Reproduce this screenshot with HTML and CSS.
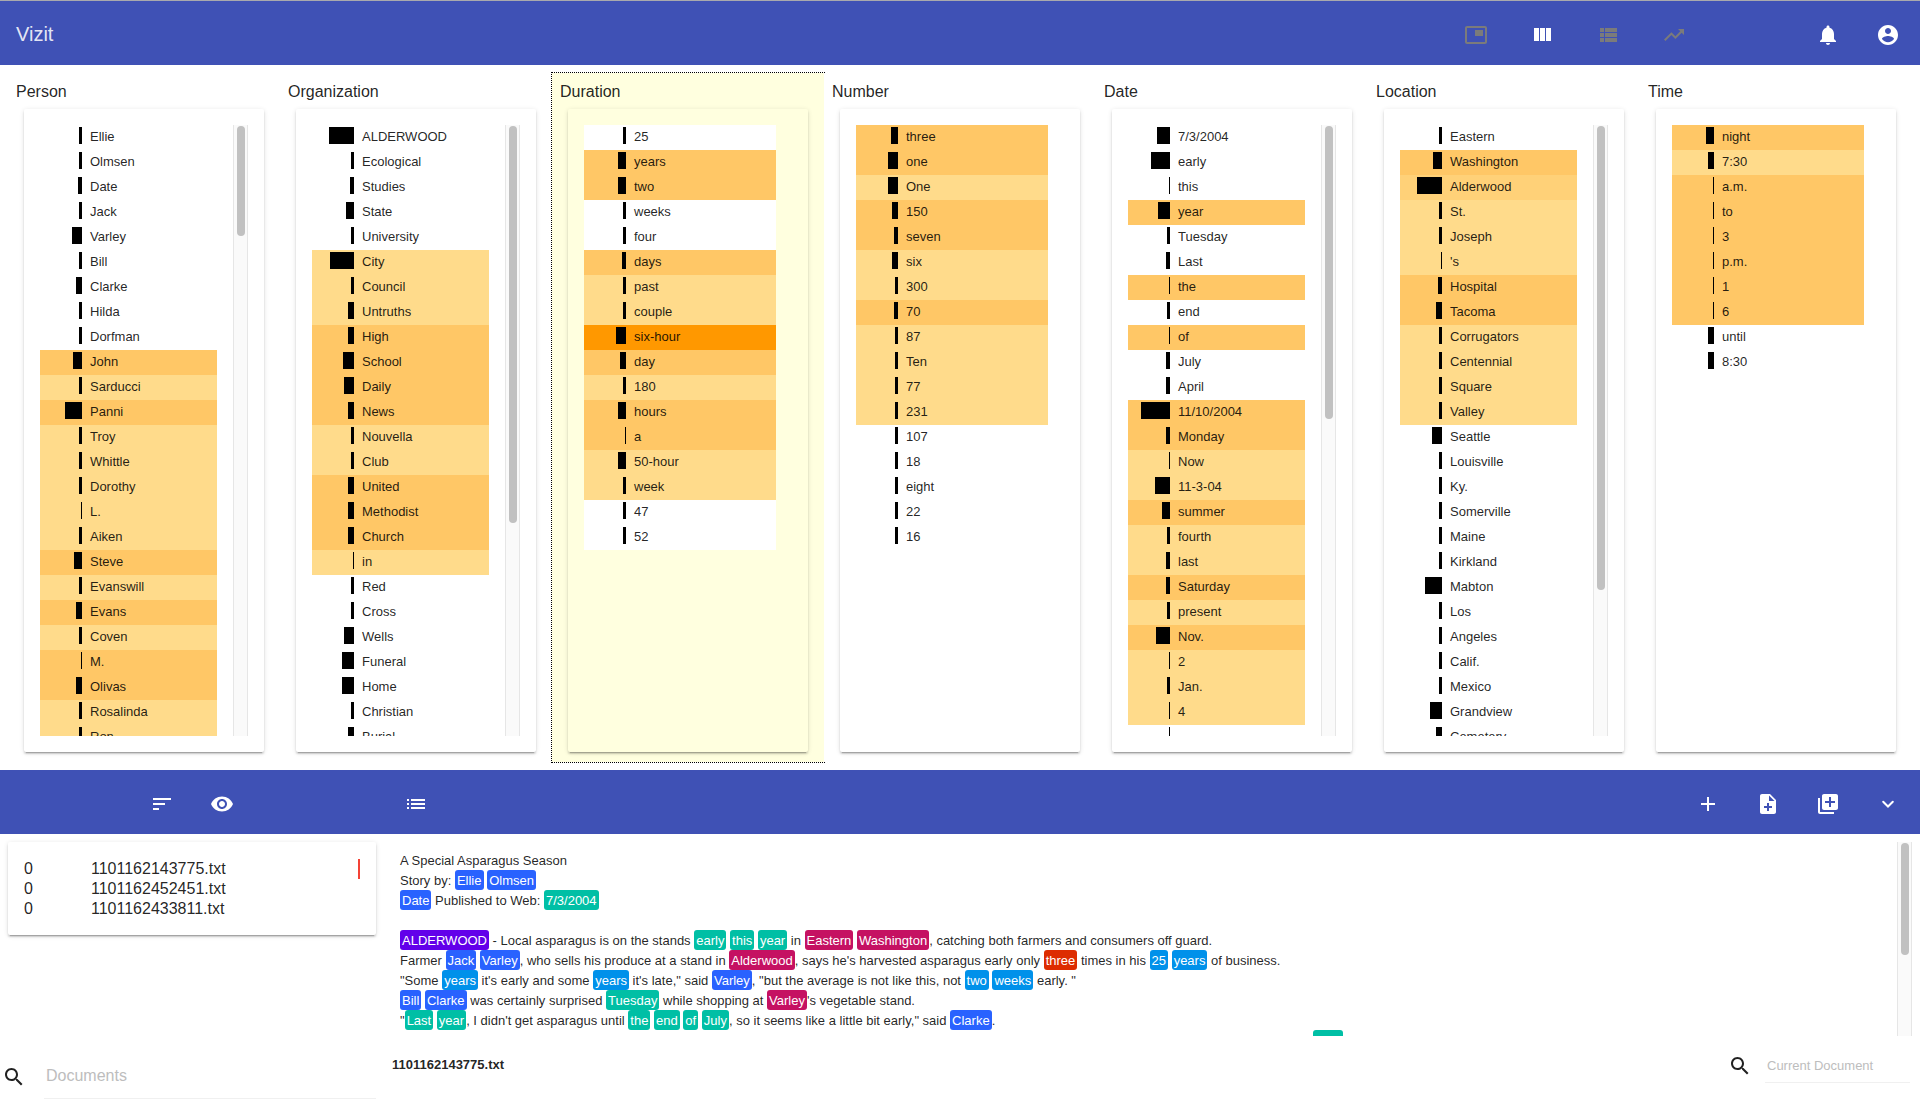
FILE: index.html
```html
<!DOCTYPE html>
<html lang="en">
<head>
<meta charset="utf-8">
<title>Vizit</title>
<link rel="stylesheet" href="styles.css">
</head>
<body>
<header class="toolbar top-bar">
  <h1 class="brand">Vizit</h1>
  <nav class="views" aria-label="Views">
    <button class="icon-btn muted" aria-label="Document view"><svg viewBox="0 0 24 24"><path d="M19 7h-8v6h8V7zm2-4H3c-1.100 0-2 .9-2 2v14c0 1.100.9 1.980 2 1.980h18c1.100 0 2-.880 2-1.980V5c0-1.100-.9-2-2-2zm0 16.010H3V4.980h18v14.030z"/></svg></button>
    <button class="icon-btn" aria-label="List view"><svg viewBox="0 0 24 24"><path d="M10 18h5V5h-5v13zm-6 0h5V5H4v13zM16 5v13h5V5h-5z"/></svg></button>
    <button class="icon-btn muted" aria-label="Grid view"><svg viewBox="0 0 24 24"><path d="M4 14h4v-4H4v4zm0 5h4v-4H4v4zM4 9h4V5H4v4zm5 5h12v-4H9v4zm0 5h12v-4H9v4zM9 5v4h12V5H9z"/></svg></button>
    <button class="icon-btn muted" aria-label="Timeline view"><svg viewBox="0 0 24 24"><path d="M16 6l2.290 2.290-4.880 4.880-4-4L2 16.590 3.410 18l6-6 4 4 6.300-6.290L22 12V6z"/></svg></button>
  </nav>
  <div class="actions">
    <button class="icon-btn" aria-label="Notifications"><svg viewBox="0 0 24 24"><path d="M12 22c1.100 0 2-.9 2-2h-4c0 1.100.89 2 2 2zm6-6v-5c0-3.070-1.640-5.640-4.500-6.320V4c0-.830-.670-1.500-1.500-1.500s-1.500.670-1.500 1.500v.680C7.630 5.360 6 7.920 6 11v5l-2 2v1h16v-1l-2-2z"/></svg></button>
    <button class="icon-btn" aria-label="Account"><svg viewBox="0 0 24 24"><path d="M12 2C6.480 2 2 6.480 2 12s4.480 10 10 10 10-4.480 10-10S17.520 2 12 2zm0 3c1.660 0 3 1.340 3 3s-1.340 3-3 3-3-1.340-3-3 1.340-3 3-3zm0 14.200c-2.500 0-4.710-1.280-6-3.220.030-1.990 4-3.080 6-3.080 1.990 0 5.970 1.090 6 3.080-1.290 1.940-3.500 3.220-6 3.220z"/></svg></button>
  </div>
</header>

<main class="columns">
  <section class="column">
    <h2>Person</h2>
    <div class="card"><div class="scroller">
      <ul>
        <li><i style="width:3px"></i>Ellie</li>
        <li><i style="width:3px"></i>Olmsen</li>
        <li><i style="width:4px"></i>Date</li>
        <li><i style="width:3px"></i>Jack</li>
        <li><i style="width:10px"></i>Varley</li>
        <li><i style="width:3px"></i>Bill</li>
        <li><i style="width:6px"></i>Clarke</li>
        <li><i style="width:3px"></i>Hilda</li>
        <li><i style="width:3px"></i>Dorfman</li>
        <li class="mid"><i style="width:9px"></i>John</li>
        <li class="low"><i style="width:3px"></i>Sarducci</li>
        <li class="mid"><i style="width:17px"></i>Panni</li>
        <li class="low"><i style="width:3px"></i>Troy</li>
        <li class="low"><i style="width:3px"></i>Whittle</li>
        <li class="low"><i style="width:3px"></i>Dorothy</li>
        <li class="low"><i style="width:1px"></i>L.</li>
        <li class="low"><i style="width:3px"></i>Aiken</li>
        <li class="mid"><i style="width:8px"></i>Steve</li>
        <li class="low"><i style="width:3px"></i>Evanswill</li>
        <li class="mid"><i style="width:6px"></i>Evans</li>
        <li class="low"><i style="width:3px"></i>Coven</li>
        <li class="mid"><i style="width:1px"></i>M.</li>
        <li class="mid"><i style="width:6px"></i>Olivas</li>
        <li class="low"><i style="width:3px"></i>Rosalinda</li>
        <li class="low"><i style="width:3px"></i>Ron</li>
      </ul>
      <div class="track"><div class="thumb" style="height:18%"></div></div>
    </div></div>
  </section>

  <section class="column">
    <h2>Organization</h2>
    <div class="card"><div class="scroller">
      <ul>
        <li><i style="width:25px"></i>ALDERWOOD</li>
        <li><i style="width:3px"></i>Ecological</li>
        <li><i style="width:4px"></i>Studies</li>
        <li><i style="width:8px"></i>State</li>
        <li><i style="width:3px"></i>University</li>
        <li class="low"><i style="width:24px"></i>City</li>
        <li class="low"><i style="width:3px"></i>Council</li>
        <li class="low"><i style="width:6px"></i>Untruths</li>
        <li class="mid"><i style="width:6px"></i>High</li>
        <li class="mid"><i style="width:11px"></i>School</li>
        <li class="mid"><i style="width:10px"></i>Daily</li>
        <li class="mid"><i style="width:6px"></i>News</li>
        <li class="low"><i style="width:3px"></i>Nouvella</li>
        <li class="low"><i style="width:3px"></i>Club</li>
        <li class="mid"><i style="width:6px"></i>United</li>
        <li class="mid"><i style="width:6px"></i>Methodist</li>
        <li class="mid"><i style="width:6px"></i>Church</li>
        <li class="low"><i style="width:1px"></i>in</li>
        <li><i style="width:3px"></i>Red</li>
        <li><i style="width:3px"></i>Cross</li>
        <li><i style="width:10px"></i>Wells</li>
        <li><i style="width:12px"></i>Funeral</li>
        <li><i style="width:12px"></i>Home</li>
        <li><i style="width:3px"></i>Christian</li>
        <li><i style="width:6px"></i>Burial</li>
      </ul>
      <div class="track"><div class="thumb" style="height:65%"></div></div>
    </div></div>
  </section>

  <section class="column selected">
    <h2>Duration</h2>
    <div class="card"><div class="scroller">
      <ul>
        <li><i style="width:3px"></i>25</li>
        <li class="mid"><i style="width:8px"></i>years</li>
        <li class="mid"><i style="width:8px"></i>two</li>
        <li><i style="width:3px"></i>weeks</li>
        <li><i style="width:3px"></i>four</li>
        <li class="mid"><i style="width:4px"></i>days</li>
        <li class="low"><i style="width:3px"></i>past</li>
        <li class="low"><i style="width:3px"></i>couple</li>
        <li class="hot"><i style="width:10px"></i>six-hour</li>
        <li class="mid"><i style="width:6px"></i>day</li>
        <li class="low"><i style="width:3px"></i>180</li>
        <li class="mid"><i style="width:8px"></i>hours</li>
        <li class="mid"><i style="width:1px"></i>a</li>
        <li class="low"><i style="width:8px"></i>50-hour</li>
        <li class="low"><i style="width:3px"></i>week</li>
        <li><i style="width:3px"></i>47</li>
        <li><i style="width:3px"></i>52</li>
      </ul>
    </div></div>
  </section>

  <section class="column">
    <h2>Number</h2>
    <div class="card"><div class="scroller">
      <ul>
        <li class="mid"><i style="width:7px"></i>three</li>
        <li class="mid"><i style="width:10px"></i>one</li>
        <li class="low"><i style="width:10px"></i>One</li>
        <li class="mid"><i style="width:6px"></i>150</li>
        <li class="mid"><i style="width:4px"></i>seven</li>
        <li class="low"><i style="width:6px"></i>six</li>
        <li class="low"><i style="width:3px"></i>300</li>
        <li class="mid"><i style="width:4px"></i>70</li>
        <li class="low"><i style="width:3px"></i>87</li>
        <li class="low"><i style="width:3px"></i>Ten</li>
        <li class="low"><i style="width:3px"></i>77</li>
        <li class="low"><i style="width:3px"></i>231</li>
        <li><i style="width:3px"></i>107</li>
        <li><i style="width:3px"></i>18</li>
        <li><i style="width:3px"></i>eight</li>
        <li><i style="width:3px"></i>22</li>
        <li><i style="width:3px"></i>16</li>
      </ul>
    </div></div>
  </section>

  <section class="column">
    <h2>Date</h2>
    <div class="card"><div class="scroller">
      <ul>
        <li><i style="width:13px"></i>7/3/2004</li>
        <li><i style="width:19px"></i>early</li>
        <li><i style="width:1px"></i>this</li>
        <li class="mid"><i style="width:12px"></i>year</li>
        <li><i style="width:3px"></i>Tuesday</li>
        <li><i style="width:4px"></i>Last</li>
        <li class="mid"><i style="width:1px"></i>the</li>
        <li><i style="width:3px"></i>end</li>
        <li class="mid"><i style="width:1px"></i>of</li>
        <li><i style="width:4px"></i>July</li>
        <li><i style="width:4px"></i>April</li>
        <li class="mid"><i style="width:29px"></i>11/10/2004</li>
        <li class="mid"><i style="width:4px"></i>Monday</li>
        <li class="low"><i style="width:1px"></i>Now</li>
        <li class="low"><i style="width:15px"></i>11-3-04</li>
        <li class="mid"><i style="width:8px"></i>summer</li>
        <li class="low"><i style="width:3px"></i>fourth</li>
        <li class="low"><i style="width:4px"></i>last</li>
        <li class="mid"><i style="width:4px"></i>Saturday</li>
        <li class="low"><i style="width:3px"></i>present</li>
        <li class="mid"><i style="width:14px"></i>Nov.</li>
        <li class="low"><i style="width:1px"></i>2</li>
        <li class="low"><i style="width:3px"></i>Jan.</li>
        <li class="low"><i style="width:1px"></i>4</li>
        <li><i style="width:1px"></i>,</li>
      </ul>
      <div class="track"><div class="thumb" style="height:48%"></div></div>
    </div></div>
  </section>

  <section class="column">
    <h2>Location</h2>
    <div class="card"><div class="scroller">
      <ul>
        <li><i style="width:3px"></i>Eastern</li>
        <li class="mid"><i style="width:9px"></i>Washington</li>
        <li class="midlow"><i style="width:25px"></i>Alderwood</li>
        <li class="low"><i style="width:3px"></i>St.</li>
        <li class="low"><i style="width:3px"></i>Joseph</li>
        <li class="low"><i style="width:1px"></i>'s</li>
        <li class="mid"><i style="width:4px"></i>Hospital</li>
        <li class="mid"><i style="width:6px"></i>Tacoma</li>
        <li class="low"><i style="width:3px"></i>Corrugators</li>
        <li class="low"><i style="width:3px"></i>Centennial</li>
        <li class="low"><i style="width:3px"></i>Square</li>
        <li class="low"><i style="width:3px"></i>Valley</li>
        <li><i style="width:10px"></i>Seattle</li>
        <li><i style="width:3px"></i>Louisville</li>
        <li><i style="width:3px"></i>Ky.</li>
        <li><i style="width:3px"></i>Somerville</li>
        <li><i style="width:3px"></i>Maine</li>
        <li><i style="width:3px"></i>Kirkland</li>
        <li><i style="width:17px"></i>Mabton</li>
        <li><i style="width:3px"></i>Los</li>
        <li><i style="width:3px"></i>Angeles</li>
        <li><i style="width:3px"></i>Calif.</li>
        <li><i style="width:3px"></i>Mexico</li>
        <li><i style="width:12px"></i>Grandview</li>
        <li><i style="width:6px"></i>Cemetery</li>
      </ul>
      <div class="track"><div class="thumb" style="height:76%"></div></div>
    </div></div>
  </section>

  <section class="column">
    <h2>Time</h2>
    <div class="card"><div class="scroller">
      <ul>
        <li class="mid"><i style="width:8px"></i>night</li>
        <li class="low"><i style="width:6px"></i>7:30</li>
        <li class="mid"><i style="width:1px"></i>a.m.</li>
        <li class="mid"><i style="width:1px"></i>to</li>
        <li class="mid"><i style="width:1px"></i>3</li>
        <li class="mid"><i style="width:1px"></i>p.m.</li>
        <li class="mid"><i style="width:1px"></i>1</li>
        <li class="mid"><i style="width:1px"></i>6</li>
        <li><i style="width:6px"></i>until</li>
        <li><i style="width:6px"></i>8:30</li>
      </ul>
    </div></div>
  </section>
</main>

<div class="toolbar doc-bar">
  <div class="doc-tools">
    <button class="icon-btn" aria-label="Sort documents"><svg viewBox="0 0 24 24"><path d="M3 18h6v-2H3v2zM3 6v2h18V6H3zm0 7h12v-2H3v2z"/></svg></button>
    <button class="icon-btn" aria-label="Show document"><svg viewBox="0 0 24 24"><path d="M12 4.500C7 4.500 2.730 7.610 1 12c1.730 4.390 6 7.500 11 7.500s9.270-3.110 11-7.500c-1.730-4.390-6-7.500-11-7.500zM12 17c-2.760 0-5-2.240-5-5s2.240-5 5-5 5 2.240 5 5-2.240 5-5 5zm0-8c-1.660 0-3 1.340-3 3s1.340 3 3 3 3-1.340 3-3-1.340-3-3-3z"/></svg></button>
  </div>
  <button class="icon-btn text-tool" aria-label="Entity list"><svg viewBox="0 0 24 24"><path d="M3 13h2v-2H3v2zm0 4h2v-2H3v2zm0-8h2V7H3v2zm4 4h14v-2H7v2zm0 4h14v-2H7v2zM7 7v2h14V7H7z"/></svg></button>
  <div class="actions">
    <button class="icon-btn" aria-label="Add"><svg viewBox="0 0 24 24"><path d="M19 13h-6v6h-2v-6H5v-2h6V5h2v6h6v2z"/></svg></button>
    <button class="icon-btn" aria-label="Add document"><svg viewBox="0 0 24 24"><path d="M14 2H6c-1.100 0-1.990.9-1.990 2L4 20c0 1.100.89 2 1.990 2H18c1.100 0 2-.9 2-2V8l-6-6zm2 14h-3v3h-2v-3H8v-2h3v-3h2v3h3v2zm-3-7V3.500L18.500 9H13z"/></svg></button>
    <button class="icon-btn" aria-label="Add collection"><svg viewBox="0 0 24 24"><path d="M4 6H2v14c0 1.100.9 2 2 2h14v-2H4V6zm16-4H8c-1.100 0-2 .9-2 2v12c0 1.100.9 2 2 2h12c1.100 0 2-.9 2-2V4c0-1.100-.9-2-2-2zm-1 9h-4v4h-2v-4H9V9h4V5h2v4h4v2z"/></svg></button>
    <button class="icon-btn" aria-label="Collapse"><svg viewBox="0 0 24 24"><path d="M7.200 9.700L12 14.500l4.800-4.800" fill="none" stroke="currentColor" stroke-width="2" stroke-linecap="round"/></svg></button>
  </div>
</div>

<div class="workspace">
  <aside class="documents">
    <div class="card doc-card">
      <table>
        <tr><td class="count">0</td><td>1101162143775.txt</td><td class="mark"><span></span></td></tr>
        <tr><td class="count">0</td><td>1101162452451.txt</td><td></td></tr>
        <tr><td class="count">0</td><td>1101162433811.txt</td><td></td></tr>
      </table>
    </div>
    <label class="search doc-search">
      <svg viewBox="0 0 24 24"><path d="M15.500 14h-.79l-.28-.27C15.410 12.590 16 11.110 16 9.500 16 5.910 13.090 3 9.500 3S3 5.910 3 9.500 5.910 16 9.500 16c1.610 0 3.090-.590 4.230-1.570l.27.28v.79l5 4.990L20.490 19l-4.990-5zm-6 0C7.010 14 5 11.990 5 9.500S7.010 5 9.500 5 14 7.010 14 9.500 11.990 14 9.500 14z"/></svg>
      <input type="text" placeholder="Documents" aria-label="Search documents">
    </label>
  </aside>
  <section class="reader">
    <div class="reader-view">
      <div class="text">
        <p>A Special Asparagus Season</p>
        <p>Story by: <mark class="person">Ellie</mark> <mark class="person">Olmsen</mark></p>
        <p><mark class="person">Date</mark> Published to Web: <mark class="date">7/3/2004</mark></p>
        <p><br></p>
        <p><mark class="org">ALDERWOOD</mark> - Local asparagus is on the stands <mark class="date">early</mark> <mark class="date">this</mark> <mark class="date">year</mark> in <mark class="location">Eastern</mark> <mark class="location">Washington</mark>, catching both farmers and consumers off guard.</p>
        <p>Farmer <mark class="person">Jack</mark> <mark class="person">Varley</mark>, who sells his produce at a stand in <mark class="location">Alderwood</mark>, says he's harvested asparagus early only <mark class="number">three</mark> times in his <mark class="duration">25</mark> <mark class="duration">years</mark> of business.</p>
        <p>"Some <mark class="duration">years</mark> it's early and some <mark class="duration">years</mark> it's late," said <mark class="person">Varley</mark>, "but the average is not like this, not <mark class="duration">two</mark> <mark class="duration">weeks</mark> early. "</p>
        <p><mark class="person">Bill</mark> <mark class="person">Clarke</mark> was certainly surprised <mark class="date">Tuesday</mark> while shopping at <mark class="location">Varley</mark>'s vegetable stand.</p>
        <p>"<mark class="date">Last</mark> <mark class="date">year</mark>, I didn't get asparagus until <mark class="date">the</mark> <mark class="date">end</mark> <mark class="date">of</mark> <mark class="date">July</mark>, so it seems like a little bit early," said <mark class="person">Clarke</mark>.</p>
        <p>Other growers across the region have seen a warm spring come sooner than usual. Some are now cutting and packing asparagus that is almost ready in early <mark class="date">April</mark></p>
      </div>
      <div class="track"><div class="thumb" style="height:58%"></div></div>
    </div>
    <div class="reader-foot">
      <strong>1101162143775.txt</strong>
      <label class="search text-search">
        <svg viewBox="0 0 24 24"><path d="M15.500 14h-.79l-.28-.27C15.410 12.590 16 11.110 16 9.500 16 5.910 13.090 3 9.500 3S3 5.910 3 9.500 5.910 16 9.500 16c1.610 0 3.090-.590 4.230-1.570l.27.28v.79l5 4.990L20.490 19l-4.990-5zm-6 0C7.010 14 5 11.990 5 9.500S7.010 5 9.500 5 14 7.010 14 9.500 11.990 14 9.500 14z"/></svg>
        <input type="text" placeholder="Current Document" aria-label="Search current document">
      </label>
    </div>
  </section>
</div>
</body>
</html>
```
FILE: styles.css
```css
* { box-sizing: border-box; }

body {
  margin: 0;
  height: 100vh;
  display: flex;
  flex-direction: column;
  overflow: hidden;
  background: #fff;
  color: rgba(0, 0, 0, .87);
  font: 13px/20px "Liberation Sans", Arial, sans-serif;
}

h1, h2, p, ul { margin: 0; padding: 0; font-weight: 400; }

/* Toolbars */
.toolbar {
  flex: none;
  display: flex;
  align-items: center;
  height: 64px;
  padding: 4px 12px 0 16px;
  background: #3f51b5;
  color: #fff;
}
.top-bar { height: 65px; border-top: 1px solid #a9a9ad; }
.brand { flex: 1; font-size: 20px; line-height: 28px; padding-bottom: 2px; color: rgba(255, 255, 255, .87); }
.views { display: flex; gap: 26px; margin-right: 114px; }
.actions { display: flex; gap: 20px; }
.icon-btn {
  display: flex;
  align-items: center;
  justify-content: center;
  width: 40px;
  height: 40px;
  padding: 0;
  border: 0;
  background: none;
  color: #fff;
}
.icon-btn.muted { color: #7b7b7b; }
svg { display: block; width: 24px; height: 24px; fill: currentColor; }

.doc-bar { padding-left: 0; }
.doc-tools { display: flex; justify-content: center; gap: 20px; width: 384px; }
.text-tool { margin: 0 auto 0 12px; }

/* Entity columns */
.columns {
  flex: 1;
  min-height: 0;
  display: grid;
  grid-template-columns: repeat(7, 1fr);
  padding: 8px;
}
.column {
  position: relative;
  min-width: 0;
  min-height: 0;
  display: flex;
  flex-direction: column;
  padding: 9px 8px 10px;
  background: #fff;
}
.column.selected { z-index: 0; background: #ffffdf; outline: 1px dotted #000; }
.column.selected + .column { z-index: 1; }
.column h2 { font-size: 16px; line-height: 20px; }
.card {
  border-radius: 2px;
  box-shadow: 0 3px 1px -2px rgba(0, 0, 0, .2), 0 2px 2px 0 rgba(0, 0, 0, .14), 0 1px 5px 0 rgba(0, 0, 0, .12);
}
.column .card {
  flex: 1;
  min-height: 0;
  margin: 7px 8px 0;
  padding: 16px;
}
.scroller { display: flex; height: 100%; overflow: hidden; }
.scroller ul { flex: 1; min-width: 0; margin-right: 16px; list-style: none; }
.scroller li {
  display: grid;
  grid-template-columns: 42px 1fr;
  column-gap: 8px;
  height: 25px;
  line-height: 24px;
  background: #fff;
  white-space: nowrap;
}
.scroller li i { justify-self: end; height: 17px; margin-top: 2px; background: #000; }
.scroller li.low { background: #ffdb8b; }
.scroller li.midlow { background: #ffd178; }
.scroller li.mid { background: #ffc766; }
.scroller li.hot { background: #ff9800; }

.track {
  flex: none;
  width: 15px;
  padding: 1px 2px 0 3px;
  background: #fafafa;
  border: solid #e6e6e6;
  border-width: 0 1px;
}
.thumb { width: 8px; border-radius: 4px; background: #c1c1c1; }

/* Documents and reader */
.workspace { flex: none; display: flex; }
.documents {
  width: 384px;
  display: flex;
  flex-direction: column;
  justify-content: space-between;
  padding: 8px 8px 0;
}
.doc-card { padding: 17px 16px 16px; }
.doc-card table { width: 100%; border-collapse: collapse; font-size: 16px; line-height: 20px; }
.doc-card td { padding: 0; }
.doc-card .count { width: 67px; }
.doc-card .mark span { display: block; width: 2px; height: 20px; margin-left: auto; background: #f44336; }

.search { display: flex; align-items: center; }
.search input {
  flex: 1;
  min-width: 0;
  padding: 0 2px;
  border: 0;
  border-bottom: 1px solid #f0f0f0;
  outline: 0;
  background: none;
  font: inherit;
}
.search input::placeholder { color: #bdbdbd; opacity: 1; }
.doc-search { gap: 18px; margin-left: -6px; }
.doc-search input { height: 44px; padding-bottom: 2px; font-size: 16px; }

.reader { flex: 1; min-width: 0; padding: 8px 8px 0; }
.reader-view { display: flex; height: 194px; overflow: hidden; }
.text { flex: 1; padding: 9px 8px 0; white-space: nowrap; }
mark { padding: 3px 2px 2px; border-radius: 3px; color: #fff; }
.text p { height: 20px; }
.person { background: #2962ff; }
.org { background: #6200ea; }
.location { background: #c51162; }
.date { background: #00bfa5; }
.duration { background: #0091ea; }
.number { background: #dd2c00; }
.reader-foot {
  display: flex;
  align-items: flex-start;
  justify-content: space-between;
  height: 63px;
  padding-top: 18px;
}
.reader-foot strong { line-height: 22px; }
.text-search { align-items: flex-start; gap: 13px; width: 182px; margin-right: 2px; }
.text-search input { height: 29px; padding-bottom: 6px; }
```
